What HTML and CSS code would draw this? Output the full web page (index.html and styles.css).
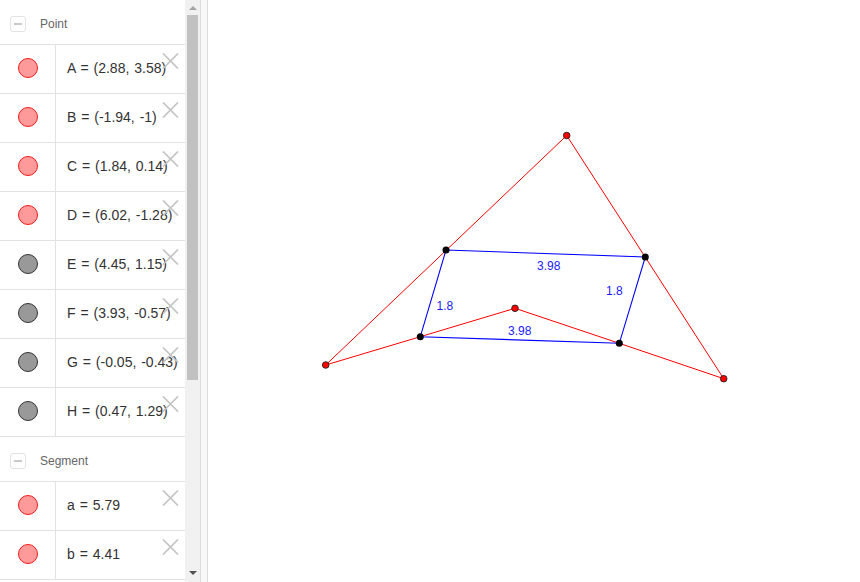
FILE: index.html
```html
<!DOCTYPE html>
<html>
<head>
<meta charset="utf-8">
<title>Algebra view</title>
<link rel="stylesheet" href="styles.css">
</head>
<body>
<div class="app">
  <div class="algebra">
    <div class="list">
      <div class="group-header"><span class="toggle"><span class="minus"></span></span><span class="group-title">Point</span></div>
      <div class="item"><div class="marble-cell"><span class="marble red"></span></div><div class="item-text">A = (2.88, 3.58)</div><svg class="delete" viewBox="0 0 17 16"><path d="M1 0.5 L16 15.5 M16 0.5 L1 15.5"/></svg></div>
      <div class="item"><div class="marble-cell"><span class="marble red"></span></div><div class="item-text">B = (-1.94, -1)</div><svg class="delete" viewBox="0 0 17 16"><path d="M1 0.5 L16 15.5 M16 0.5 L1 15.5"/></svg></div>
      <div class="item"><div class="marble-cell"><span class="marble red"></span></div><div class="item-text">C = (1.84, 0.14)</div><svg class="delete" viewBox="0 0 17 16"><path d="M1 0.5 L16 15.5 M16 0.5 L1 15.5"/></svg></div>
      <div class="item"><div class="marble-cell"><span class="marble red"></span></div><div class="item-text">D = (6.02, -1.28)</div><svg class="delete" viewBox="0 0 17 16"><path d="M1 0.5 L16 15.5 M16 0.5 L1 15.5"/></svg></div>
      <div class="item"><div class="marble-cell"><span class="marble gray"></span></div><div class="item-text">E = (4.45, 1.15)</div><svg class="delete" viewBox="0 0 17 16"><path d="M1 0.5 L16 15.5 M16 0.5 L1 15.5"/></svg></div>
      <div class="item"><div class="marble-cell"><span class="marble gray"></span></div><div class="item-text">F = (3.93, -0.57)</div><svg class="delete" viewBox="0 0 17 16"><path d="M1 0.5 L16 15.5 M16 0.5 L1 15.5"/></svg></div>
      <div class="item"><div class="marble-cell"><span class="marble gray"></span></div><div class="item-text">G = (-0.05, -0.43)</div><svg class="delete" viewBox="0 0 17 16"><path d="M1 0.5 L16 15.5 M16 0.5 L1 15.5"/></svg></div>
      <div class="item"><div class="marble-cell"><span class="marble gray"></span></div><div class="item-text">H = (0.47, 1.29)</div><svg class="delete" viewBox="0 0 17 16"><path d="M1 0.5 L16 15.5 M16 0.5 L1 15.5"/></svg></div>
      <div class="group-header seg"><span class="toggle"><span class="minus"></span></span><span class="group-title">Segment</span></div>
      <div class="item"><div class="marble-cell"><span class="marble red"></span></div><div class="item-text">a = 5.79</div><svg class="delete" viewBox="0 0 17 16"><path d="M1 0.5 L16 15.5 M16 0.5 L1 15.5"/></svg></div>
      <div class="item"><div class="marble-cell"><span class="marble red"></span></div><div class="item-text">b = 4.41</div><svg class="delete" viewBox="0 0 17 16"><path d="M1 0.5 L16 15.5 M16 0.5 L1 15.5"/></svg></div>
    </div>
    <div class="scrollbar">
      <div class="arrow-box"><span class="arrow up"></span></div>
      <div class="thumb"></div>
      <div class="track-rest"></div>
      <div class="arrow-box"><span class="arrow down"></span></div>
    </div>
  </div>
  <div class="divider"></div>
  <div class="canvas">
    <svg class="graphics" viewBox="208 0 652 582" width="652" height="582">
      <g class="red-lines">
        <line x1="566.7" y1="135.5" x2="325.7" y2="365"/>
        <line x1="566.7" y1="135.5" x2="723.7" y2="378.7"/>
        <polyline points="325.7,365 420.3,336.7 515,308.3 619.3,343.3 723.7,378.7"/>
      </g>
      <polygon class="blue-quad" points="446,250 645.3,257 619.3,343.3 420.3,336.7"/>
      <g class="labels">
        <text x="537" y="269.5">3.98</text>
        <text x="436.5" y="309.5">1.8</text>
        <text x="606" y="294.5">1.8</text>
        <text x="508" y="335">3.98</text>
      </g>
      <g class="pt-black">
        <circle cx="446" cy="250" r="3.5"/>
        <circle cx="645.3" cy="257" r="3.5"/>
        <circle cx="420.3" cy="336.7" r="3.5"/>
        <circle cx="619.3" cy="343.3" r="3.5"/>
      </g>
      <g class="pt-red">
        <circle cx="566.7" cy="135.5" r="3.3"/>
        <circle cx="325.7" cy="365" r="3.3"/>
        <circle cx="723.7" cy="378.7" r="3.3"/>
        <circle cx="515" cy="308.3" r="3.3"/>
      </g>
    </svg>
  </div>
</div>
</body>
</html>
```

FILE: styles.css
```css
html, body {
  margin: 0;
  padding: 0;
  width: 860px;
  height: 582px;
  overflow: hidden;
  background: #ffffff;
  font-family: "Liberation Sans", Arial, sans-serif;
}

.app {
  display: flex;
  width: 860px;
  height: 582px;
}

.algebra {
  display: flex;
  width: 200px;
  height: 582px;
  flex: none;
}

.list {
  width: 185px;
  height: 582px;
  overflow: hidden;
  flex: none;
  background: #fff;
}

.group-header {
  border-bottom: 1px solid #e2e2e2;
  display: flex;
  align-items: center;
  padding-top: 3px;
  box-sizing: content-box;
  height: 41px;
}

.toggle {
  width: 14px;
  height: 14px;
  margin-left: 10px;
  border: 1px solid #e3e3e3;
  border-radius: 3px;
  display: flex;
  align-items: center;
  justify-content: center;
  background: #fff;
}

.minus {
  width: 8px;
  height: 2px;
  background: #c9c9c9;
}

.group-title {
  margin-left: 14px;
  font-size: 12px;
  color: #666666;
}

.item {
  position: relative;
  height: 48px;
  border-bottom: 1px solid #e2e2e2;
  display: flex;
}

.marble-cell {
  width: 56px;
  border-right: 1px solid #e2e2e2;
  display: flex;
  align-items: center;
  justify-content: center;
  padding-bottom: 3px;
  box-sizing: border-box;
  flex: none;
}

.marble {
  width: 18px;
  height: 18px;
  border-radius: 50%;
  box-sizing: content-box;
}

.marble.red {
  background: #ff9a9a;
  border: 1px solid #f01a1a;
}

.marble.gray {
  background: #999999;
  border: 1px solid #333333;
}

.item-text {
  padding-left: 11px;
  padding-bottom: 3px;
  display: flex;
  align-items: center;
  font-size: 14px;
  word-spacing: 1px;
  color: #333333;
  white-space: nowrap;
}

.delete {
  position: absolute;
  top: 8px;
  right: 6px;
  width: 17px;
  height: 16px;
  fill: none;
  stroke: #c4c4c4;
  stroke-width: 1.7;
}

.scrollbar {
  width: 15px;
  height: 582px;
  background: #f1f1f1;
  display: flex;
  flex-direction: column;
  flex: none;
}

.arrow-box {
  height: 15px;
  display: flex;
  align-items: center;
  justify-content: center;
}

.arrow {
  width: 0;
  height: 0;
  border-left: 4px solid transparent;
  border-right: 4px solid transparent;
}

.arrow.up {
  border-bottom: 4px solid #a3a3a3;
}

.arrow.down {
  border-top: 4px solid #505050;
  margin-top: -4px;
}

.thumb {
  height: 365px;
  margin: 0 2px;
  background: #c1c1c1;
}

.track-rest {
  flex: 1;
}

.divider {
  width: 6px;
  flex: none;
  background: #f8f8f8;
  border-left: 1px solid #dcdcdc;
  border-right: 1px solid #dcdcdc;
}

.canvas {
  flex: 1;
  height: 582px;
  background: #ffffff;
}

.graphics {
  display: block;
}

.red-lines line,
.red-lines polyline {
  stroke: #ff0000;
  stroke-width: 1;
  fill: none;
}

.blue-quad {
  fill: none;
  stroke: #0000ff;
  stroke-width: 1.1;
}

.labels text {
  font-family: "Liberation Sans", Arial, sans-serif;
  font-size: 12px;
  fill: #1a1aff;
}

.pt-black circle {
  fill: #000000;
}

.pt-red circle {
  fill: #ff0000;
  stroke: #222222;
  stroke-width: 0.9;
}
```
